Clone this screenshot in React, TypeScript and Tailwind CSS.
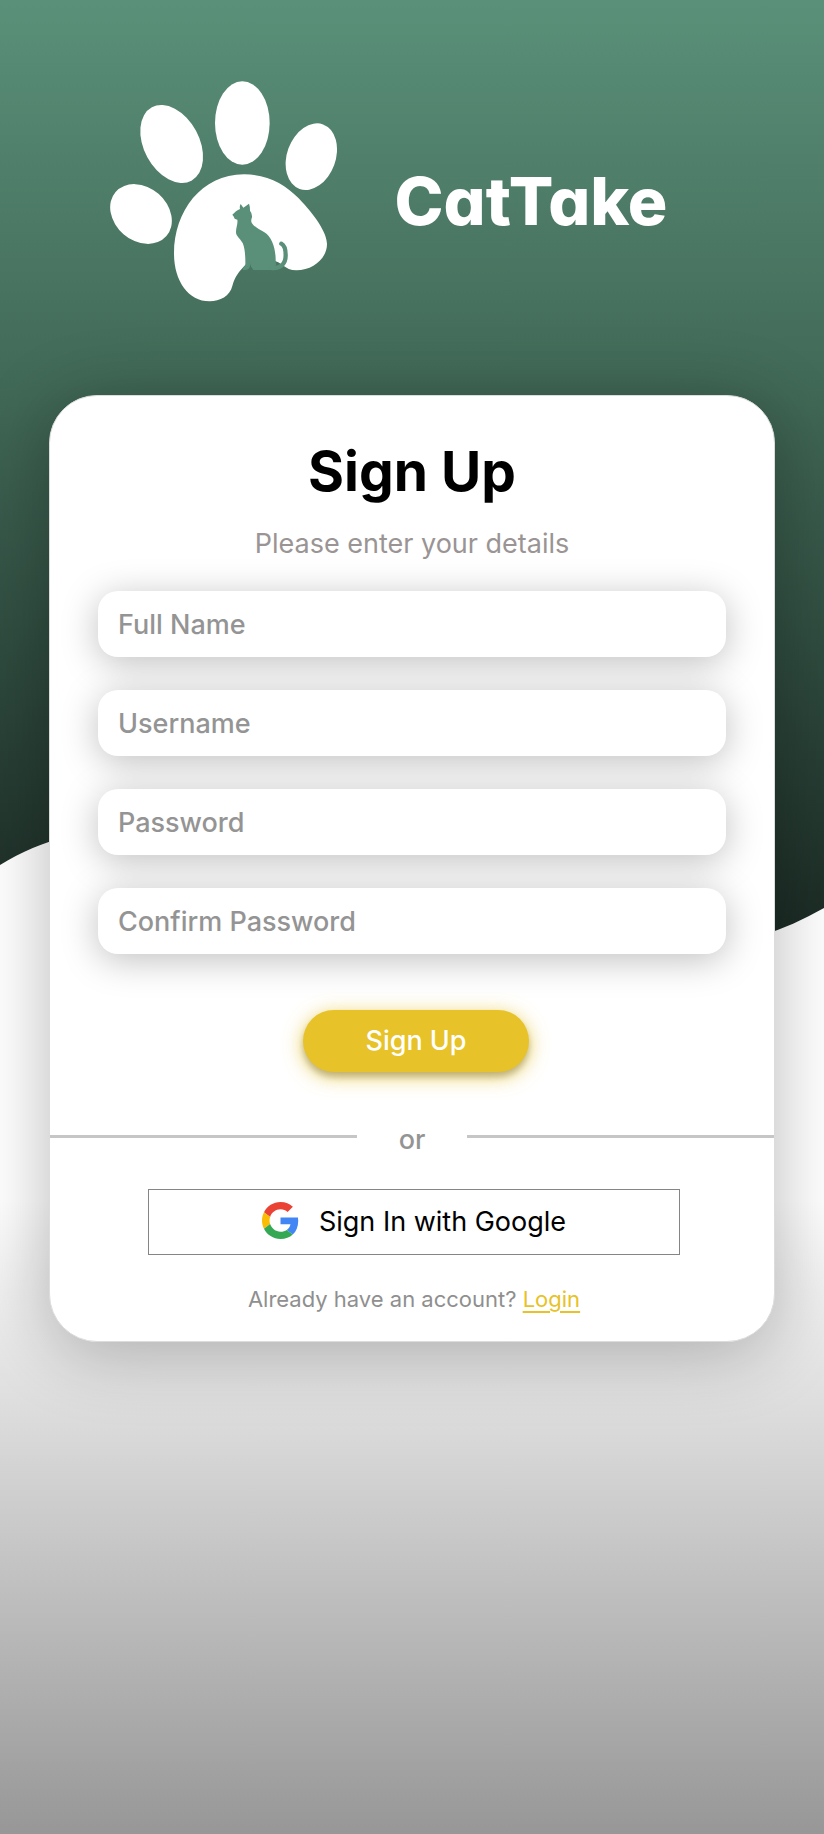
import React from "react";

const fields = [
  { id: "full-name", label: "Full Name", type: "text" },
  { id: "username", label: "Username", type: "text" },
  { id: "password", label: "Password", type: "password" },
  { id: "confirm-password", label: "Confirm Password", type: "password" },
];

function Backdrop() {
  return (
    <svg
      aria-hidden="true"
      className="absolute inset-0 h-full w-full"
      viewBox="0 0 824 1834"
      preserveAspectRatio="none"
    >
      <defs>
        <linearGradient id="green" x1="0" y1="0" x2="0" y2="940" gradientUnits="userSpaceOnUse">
          <stop offset="0" stopColor="#5a9079" />
          <stop offset="0.4" stopColor="#426a58" />
          <stop offset="1" stopColor="#1b2a24" />
        </linearGradient>
        <linearGradient id="grey" x1="0" y1="1200" x2="0" y2="1834" gradientUnits="userSpaceOnUse">
          <stop offset="0" stopColor="#ffffff" />
          <stop offset="1" stopColor="#979797" />
        </linearGradient>
      </defs>
      <rect width="824" height="1000" fill="url(#green)" />
      <path d="M0 865C240 718 540 1070 824 908V1834H0Z" fill="url(#grey)" />
    </svg>
  );
}

function PawLogo() {
  return (
    <svg
      role="img"
      aria-label="Cat paw"
      className="h-[222px] w-[230px] shrink-0"
      viewBox="30 30 690 666"
    >
      <g fill="#fff">
        <ellipse cx="433" cy="159" rx="82" ry="125" />
        <ellipse cx="221" cy="222" rx="83" ry="125" transform="rotate(-28.4 221 222)" />
        <ellipse cx="640" cy="260" rx="73" ry="103" transform="rotate(20 640 260)" />
        <ellipse cx="129" cy="432" rx="101" ry="80" transform="rotate(41 129 432)" />
        <path d="M438 313C510 313 560 342 602 385C650 435 687 488 687 522C687 565 645 601 595 601C560 601 548 572 525 572L470 568C455 573 446 580 437 590C420 608 410 622 403 648C396 678 366 694 335 694C270 694 228 632 228 550C228 425 310 313 438 313Z" />
      </g>
      <g fill="#5a9079">
        <path d="M403 434L414 424Q420 419 426 417Q424 408 428 402L436 413Q445 407 453 401Q456 408 456 422Q463 430 462 442Q458 452 461 458C468 470 484 479 498 486C522 500 533 535 533 570L534 585L528 600H466L459 592Q454 594 450 598Q442 602 434 599Q434 592 442 586Q443 540 434 519C424 503 414 498 414 486C414 472 420 462 418 449Q408 447 408 441Z" />
        <path
          d="M522 594C548 596 563 582 563 556C563 538 558 525 550 521"
          fill="none"
          stroke="#5a9079"
          strokeWidth="13"
          strokeLinecap="round"
        />
      </g>
      <path d="M457 578Q456 590 466 599L455 594Z" fill="#477360" />
    </svg>
  );
}

function GoogleIcon() {
  return (
    <svg aria-hidden="true" className="h-[37px] w-[37px]" viewBox="0 0 48 48">
      <path
        fill="#EA4335"
        d="M24 9.5c3.54 0 6.71 1.22 9.21 3.6l6.85-6.85C35.9 2.38 30.47 0 24 0 14.62 0 6.51 5.38 2.56 13.22l7.98 6.19C12.43 13.72 17.74 9.5 24 9.5z"
      />
      <path
        fill="#4285F4"
        d="M46.98 24.55c0-1.57-.15-3.09-.38-4.55H24v9.02h12.94c-.58 2.96-2.26 5.48-4.78 7.18l7.73 6c4.51-4.18 7.09-10.36 7.09-17.65z"
      />
      <path
        fill="#FBBC05"
        d="M10.53 28.59c-.48-1.45-.76-2.99-.76-4.59s.27-3.14.76-4.59l-7.98-6.19C.92 16.46 0 20.12 0 24c0 3.88.92 7.54 2.56 10.78l7.97-6.19z"
      />
      <path
        fill="#34A853"
        d="M24 48c6.48 0 11.93-2.13 15.89-5.81l-7.73-6c-2.15 1.45-4.92 2.3-8.16 2.3-6.26 0-11.57-4.22-13.47-9.91l-7.98 6.19C6.51 42.62 14.62 48 24 48z"
      />
    </svg>
  );
}

export default function App() {
  return (
    <div className="relative min-h-screen overflow-hidden bg-white font-['Inter',sans-serif]">
      <Backdrop />
      <div className="relative px-12 pt-20 pb-24">
        <header className="flex items-center justify-center gap-14 pr-12">
          <PawLogo />
          <p className="pt-5 text-[66px] leading-none font-extrabold text-white [font-feature-settings:'cv11']">
            CatTake
          </p>
        </header>

        <main className="mx-auto mt-[93px] max-w-[726px] rounded-[48px] border border-[#dcdcdc] bg-white pt-10 pb-[26px] shadow-[0_8px_72px_rgba(0,0,0,0.28)]">
          <h1 className="text-center text-[55px] leading-[70px] font-bold text-black">Sign Up</h1>
          <p className="mt-5 text-center text-[27px] leading-9 text-[#9a9494]">
            Please enter your details
          </p>

          <form className="mt-[29px]" onSubmit={(e) => e.preventDefault()}>
            <div className="flex flex-col gap-[33px] px-12">
              {fields.map((f) => (
                <label key={f.id} htmlFor={f.id} className="block">
                  <input
                    id={f.id}
                    type={f.type}
                    placeholder={f.label}
                    aria-label={f.label}
                    className="block h-[66px] w-full rounded-[20px] bg-white px-5 text-[27px] font-medium text-black shadow-[0_6px_36px_rgba(0,0,0,0.25)] outline-none placeholder:text-[#949494]"
                  />
                </label>
              ))}
            </div>
            <div className="mt-14 flex justify-center pl-2">
              <button
                type="submit"
                className="h-[62px] w-[226px] rounded-full bg-[#e7c228] text-[27px] font-medium text-white shadow-[0_5px_6px_rgba(0,0,0,0.2),0_4px_20px_rgba(231,194,40,0.8)]"
              >
                Sign Up
              </button>
            </div>
          </form>

          <div className="mt-10 flex items-center text-[27px] leading-10 font-medium text-[#949494]">
            <span className="h-[3px] flex-1 bg-[#c6c6c6]" />
            <span className="w-[110px] pt-2 text-center">or</span>
            <span className="h-[3px] flex-1 bg-[#c6c6c6]" />
          </div>

          <div className="mt-[29px] flex flex-col items-center gap-7 pl-1">
            <button
              type="button"
              className="flex h-[66px] w-[532px] items-center justify-center gap-5 border border-[#858585] bg-white pb-1 text-[27px] text-black"
            >
              <GoogleIcon />
              <span className="pt-1">Sign In with Google</span>
            </button>

            <p className="text-[22px] leading-8 text-[#8f8f8f]">
              Already have an account?{" "}
              <a href="#login" className="text-[#e7c228] underline underline-offset-4">
                Login
              </a>
            </p>
          </div>
        </main>
      </div>
    </div>
  );
}
